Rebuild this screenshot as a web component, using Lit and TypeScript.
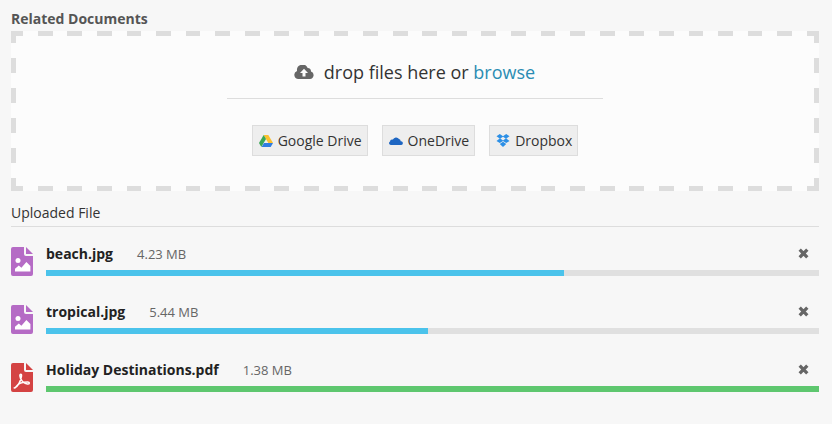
import { html, css, LitElement, svg } from "lit";
import { customElement } from "lit/decorators.js";

type UploadedFile = {
    name: string;
    size: string;
    kind: "image" | "pdf";
    percent: number;
}

const files: UploadedFile[] = [
    { name: "beach.jpg", size: "4.23 MB", kind: "image", percent: 67 },
    { name: "tropical.jpg", size: "5.44 MB", kind: "image", percent: 49.4 },
    { name: "Holiday Destinations.pdf", size: "1.38 MB", kind: "pdf", percent: 100 },
];

const imageGlyph = svg`
    <circle cx="7" cy="13.500" r="2.500" fill="#fff"/>
    <path d="M4 24.500v-2.800l3.800-3.200 2.600 2.200 5-5.700 4 4v5.500z" fill="#fff"/>`;

const pdfGlyph = svg`
    <path d="M3.500 25c3-1.500 6-6.500 7-12 .4-2.500-1.800-2.500-1.600 0 .3 3.500 3.500 7.500 7.500 8 2.400.2 2.600-1.900.3-1.900-4.300 0-9.500 1.500-11.600 4.500-.6.900-1.300 1.600-1.600 1.400z" fill="none" stroke="#fff" stroke-width="1.500"/>`;

@customElement("app-root")
export class AppRoot extends LitElement {
    static get styles() {
        return css`
            :host {
                display: block;
                height: 424px;
                box-sizing: border-box;
                padding: 9px 13px 0 11px;
                background: #f7f7f7;
                font-family: "Open Sans", sans-serif;
                color: #222;
            }
            .heading {
                font-size: 14px;
                font-weight: 700;
                line-height: 19px;
                color: #555;
                margin-bottom: 3px;
            }
            .drop {
                height: 160px;
                box-sizing: border-box;
                padding-top: 26px;
                display: flex;
                flex-direction: column;
                align-items: center;
                background-color: #fcfcfc;
                background-image:
                    repeating-linear-gradient(to right, #ddd -2.79px, #ddd 12px, transparent 12px, transparent 26.79px),
                    repeating-linear-gradient(to right, #ddd -2.79px, #ddd 12px, transparent 12px, transparent 26.79px),
                    repeating-linear-gradient(to bottom, #ddd -3px, #ddd 12px, transparent 12px, transparent 27px),
                    repeating-linear-gradient(to bottom, #ddd -3px, #ddd 12px, transparent 12px, transparent 27px);
                background-repeat: no-repeat;
                background-size: 100% 5px, 100% 5px, 5px 100%, 5px 100%;
                background-position: 0 0, 0 100%, 0 0, 100% 0;
            }
            .prompt {
                width: 376px;
                height: 41px;
                border-bottom: 1px solid #ddd;
                display: flex;
                justify-content: center;
                gap: 10px;
                font-size: 18px;
                line-height: 30px;
                color: #333;
            }
            .prompt svg { margin: 8px 0 0 -1px; }
            .prompt a { color: #2b8cb3; }
            .sources {
                display: flex;
                gap: 14px;
                margin-top: 26px;
            }
            .source {
                display: flex;
                align-items: center;
                gap: 5px;
                height: 31px;
                box-sizing: border-box;
                padding: 0 5px 0 6px;
                background: #eee;
                border: 1px solid #ddd;
                font-size: 14px;
                color: #333;
            }
            .uploaded {
                margin-top: 12px;
                height: 23px;
                border-bottom: 1px solid #ddd;
                font-size: 14px;
                line-height: 20px;
                color: #333;
            }
            .file {
                display: flex;
                gap: 13px;
                height: 30px;
                margin-top: 28px;
            }
            .uploaded + .file { margin-top: 20px; }
            .file svg.type { flex: none; }
            .body { flex: 1; }
            .info {
                display: flex;
                align-items: center;
                height: 13px;
                padding-bottom: 10px;
                font-size: 13px;
                color: #666;
            }
            .name {
                font-size: 14px;
                font-weight: 700;
                color: #222;
                margin-right: 24px;
            }
            .remove { margin-left: auto; margin-right: 10px; }
            .track {
                height: 6px;
                background: #e0e0e0;
            }
            .fill { height: 100%; background: #4bc3eb; }
            .fill.done { background: #5ec76f; }
        `;
    }

    renderFile(file: UploadedFile) {
        const colour = file.kind === "pdf" ? "#d44343" : "#b56bc5";
        return html`
            <div class="file">
                <svg class="type" width="22" height="29" viewBox="0 0 22 29">
                    <path d="M2 0h11v7a2 2 0 0 0 2 2h7v18a2 2 0 0 1-2 2H2a2 2 0 0 1-2-2V2a2 2 0 0 1 2-2z" fill=${colour}/>
                    <path d="M15 0l7 7h-7z" fill=${colour}/>
                    ${file.kind === "pdf" ? pdfGlyph : imageGlyph}
                </svg>
                <div class="body">
                    <div class="info">
                        <span class="name">${file.name}</span>
                        <span>${file.size}</span>
                        <svg class="remove" width="11" height="11" viewBox="0 0 11 11">
                            <path d="M1.700 1.700l7.600 7.600M9.300 1.700l-7.600 7.600" stroke="#666" stroke-width="3.300"/>
                        </svg>
                    </div>
                    <div class="track">
                        <div class="fill ${file.percent === 100 ? "done" : ""}" style="width: ${file.percent}%"></div>
                    </div>
                </div>
            </div>`;
    }

    render() {
        return html`
            <div class="heading">Related Documents</div>
            <div class="drop">
                <div class="prompt">
                    <svg width="20" height="14" viewBox="0 0 20 14">
                        <path d="M4.300 14A4.200 4.200 0 0 1 3 5.900 5.600 5.600 0 0 1 13.700 3 3.600 3.600 0 0 1 17 6.600 3.800 3.800 0 0 1 15.700 14z" fill="#666"/>
                        <path d="M10 3.800l4 4.200h-2.500v3.500h-3V8H6z" fill="#fcfcfc"/>
                    </svg>
                    <span>drop files here or <a>browse</a></span>
                </div>
                <div class="sources">
                    <div class="source">
                        <svg width="14" height="12" viewBox="0 0 14 12">
                            <path d="M4.700 0h4.600L14 8H9.300z" fill="#fbc02d"/>
                            <path d="M4.700 0l2.300 4L2.300 12 0 8z" fill="#3aa757"/>
                            <path d="M5 8h9l-2.300 4H2.600z" fill="#2f7de1"/>
                        </svg>
                        Google Drive
                    </div>
                    <div class="source">
                        <svg width="14" height="9" viewBox="0 0 14 9">
                            <path d="M1.800 9A1.800 1.800 0 0 1 1 5.600 2.300 2.300 0 0 1 3.900 3.600 3.500 3.500 0 0 1 10 3 2.400 2.400 0 0 1 11.700 5.200 1.900 1.900 0 0 1 12.200 9z" fill="#1e66c2"/>
                        </svg>
                        OneDrive
                    </div>
                    <div class="source">
                        <svg width="14" height="13" viewBox="-.5 0 14 13">
                            <path d="M3.300 0l3.200 2.200L9.700 0 13 2.300l-3.200 2.300L13 6.900l-3.300 2.200-3.200-2.200-3.200 2.200L0 6.900l3.200-2.300L0 2.300zM6.500 2.800L3.800 4.600l2.700 1.800 2.700-1.800zM3.300 10l3.200-2.200L9.700 10 6.500 13z" fill="#2b8fe6"/>
                        </svg>
                        Dropbox
                    </div>
                </div>
            </div>
            <div class="uploaded">Uploaded File</div>
            ${files.map((file) => this.renderFile(file))}
        `;
    }
}
